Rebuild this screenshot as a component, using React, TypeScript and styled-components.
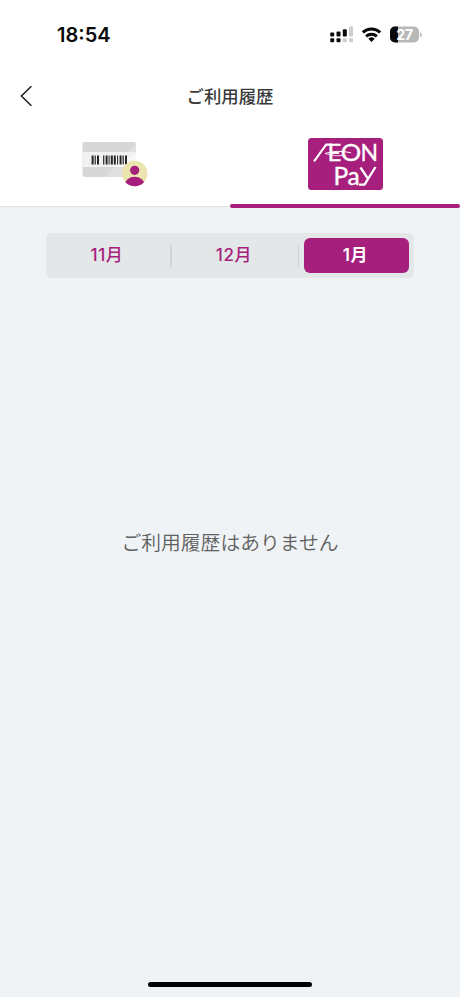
import React from 'react';
import styled, { createGlobalStyle } from 'styled-components';

const brand = '#a61f7d';

const GlobalStyle = createGlobalStyle`
  * { box-sizing: border-box; }
  html, body { margin: 0; padding: 0; }
  body { font-family: Inter, "Noto Sans CJK JP", sans-serif; background: #eff3f5; }
`;

const Screen = styled.div`
  width: 460px;
  height: 997px;
  display: flex;
  flex-direction: column;
  background: #eff3f5;
  overflow: hidden;
`;

const StatusBar = styled.div`
  height: 69px;
  flex: none;
  display: flex;
  align-items: center;
  justify-content: space-between;
  padding: 0 38px 0 57px;
  background: #fff;
`;

const Clock = styled.time`
  font: 600 20px/24px Inter, sans-serif;
  color: #0a0a0a;
`;

const StatusIcons = styled.svg`
  display: block;
  width: 92px;
  height: 20px;
  margin-bottom: 2px;
`;

const Header = styled.header`
  height: 54px;
  flex: none;
  display: grid;
  grid-template-columns: 52px 1fr 52px;
  align-items: center;
  background: #fff;
`;

const BackButton = styled.button`
  border: 0;
  padding: 0 0 0 19px;
  background: none;
  height: 24px;
  svg { display: block; }
`;

const Title = styled.h1`
  margin: 0;
  padding-bottom: 1px;
  text-align: center;
  font: 500 17.4px/24px "Noto Sans CJK JP", sans-serif;
  color: #3a3a3a;
`;

const Tabs = styled.nav`
  height: 84px;
  flex: none;
  display: flex;
  background: #fff;
  border-bottom: 1px solid #dfe2e4;
`;

const Tab = styled.button<{ $active?: boolean }>`
  flex: 1;
  height: 85px;
  border: 0;
  padding: 15px 0 0;
  display: flex;
  flex-direction: column;
  align-items: center;
  justify-content: space-between;
  background: none;
  &::after {
    content: '';
    width: 100%;
    height: 4px;
    border-radius: 2px;
    background: ${p => (p.$active ? brand : 'transparent')};
  }
  svg { display: block; }
`;

const MonthSwitch = styled.div`
  flex: none;
  width: 368px;
  height: 45px;
  margin: 26px auto 0;
  display: grid;
  grid-template-columns: 124px 2px 126px 1px 5px 105px;
  align-items: center;
  border-radius: 6px;
  background: #e3e7e8;
`;

const Month = styled.button<{ $selected?: boolean }>`
  height: 35px;
  border: 0;
  padding: 0 2px 2px 0;
  border-radius: 6px;
  font: ${p => (p.$selected ? 600 : 500)} 17px/24px Inter, "Noto Sans CJK JP", sans-serif;
  letter-spacing: 0.6px;
  color: ${p => (p.$selected ? '#fff' : brand)};
  background: ${p => (p.$selected ? brand : 'transparent')};
  &:last-child { grid-column: 6; }
`;

const Divider = styled.span`
  height: 22px;
  background: #d0d4d6;
`;

const Empty = styled.p`
  flex: 1;
  margin: 0;
  padding-top: 249px;
  text-align: center;
  font: 350 19.8px/30px "Noto Sans CJK JP", sans-serif;
  color: #606060;
`;

const HomeIndicator = styled.div`
  flex: none;
  width: 164px;
  height: 5px;
  margin: 0 auto 10px;
  border-radius: 3px;
  background: #000;
`;

function StatusGlyphs() {
  return (
    <StatusIcons viewBox="0 0 92 20">
      <g fill="#0a0a0a">
        <rect x="0.2" y="8.6" width="4" height="4" rx="1" />
        <rect x="6.5" y="7.4" width="4" height="5.2" rx="1" />
        <rect x="12.8" y="5.2" width="4" height="7.4" rx="1" />
        <rect x="0.2" y="14.3" width="4" height="4" rx="1" />
        <rect x="6.5" y="14.3" width="4" height="4" rx="1" />
      </g>
      <g fill="#cdcdcd">
        <rect x="19" y="2.5" width="4" height="10.1" rx="1" />
        <rect x="12.8" y="14.3" width="4" height="4" rx="1" />
        <rect x="19" y="14.3" width="4" height="4" rx="1" />
      </g>
      <g fill="none" stroke="#0a0a0a" strokeWidth="3">
        <path d="M32.8 8.4a12.7 12.7 0 0 1 17.4 0" />
        <path d="M36.1 12.3a8 8 0 0 1 10.8 0" />
      </g>
      <path d="M38.3 14.7a4.7 4.7 0 0 1 6.4 0L41.5 17.9z" fill="#0a0a0a" />
      <rect x="60" y="2.6" width="29" height="15.8" rx="5" fill="#b8b8b8" />
      <path d="M68 2.6h-3a5 5 0 0 0-5 5v5.8a5 5 0 0 0 5 5h3z" fill="#0a0a0a" />
      <path d="M90 8.2q1.8.5 1.8 2.5T90 13.2z" fill="#b8b8b8" />
      <text x="74.3" y="15.7" textAnchor="middle" fontFamily="Inter" fontSize="14.3" fontWeight="700" letterSpacing="-0.5" fill="#fff">27</text>
    </StatusIcons>
  );
}

const bars = [[0, 2], [3, 1.2], [5.4, 2], [11.5, 1.2], [14, 2], [17, 1], [19.2, 2], [22.2, 2], [25.5, 1], [28, 2], [31, 1.2], [33.4, 2]];

function MemberCardIcon() {
  return (
    <svg width="66" height="52" viewBox="0 0 66 52">
      <defs>
        <clipPath id="card"><rect x="0.5" y="4" width="53.5" height="35" rx="2" /></clipPath>
        <clipPath id="avatar"><circle cx="52.7" cy="35.5" r="12.7" /></clipPath>
      </defs>
      <g clipPath="url(#card)">
        <rect x="0" y="4" width="55" height="35" fill="#d7d7d7" />
        <path d="M55 4v35H23z" fill="#dfdfdf" />
        <rect x="0" y="14" width="55" height="15" fill="#f1f1f1" />
        <path d="M55 14v15H32z" fill="#f7f7f7" />
      </g>
      {bars.map(([x, w]) => <rect key={x} x={9.6 + x} y="17.5" width={w} height="9" fill="#292526" />)}
      <circle cx="52.7" cy="35.5" r="12.7" fill="#ebe4ae" />
      <g clipPath="url(#avatar)" fill={brand}>
        <circle cx="52.7" cy="32.3" r="4.6" />
        <ellipse cx="52.7" cy="47" rx="10" ry="8.2" />
      </g>
    </svg>
  );
}

function AeonPayLogo() {
  return (
    <svg width="75" height="52" viewBox="0 0 75 52">
      <rect width="75" height="52" rx="3.5" fill={brand} />
      <g fill="#fff" stroke="#fff" strokeWidth="0.35" fontFamily="Lato, sans-serif" fontWeight="400">
        <text x="19.5" y="23" fontSize="24">E</text>
        <text x="32.8" y="23" fontSize="24" textLength="20.5" lengthAdjust="spacingAndGlyphs">O</text>
        <text x="52.4" y="23" fontSize="24" textLength="17.5" lengthAdjust="spacingAndGlyphs">N</text>
        <text x="25.4" y="46.5" fontSize="24.5">P</text>
        <text x="39.5" y="46.5" fontSize="24.5">a</text>
      </g>
      <g fill="none" stroke="#fff" strokeWidth="2.1">
        <path d="M6 23.3 18.2 6.6H24" />
        <path d="M17 15.5Q29 11.5 43 14.8" strokeWidth="1" />
        <path d="M17 15.5Q27 19 38 17.5" strokeWidth="0.8" />
        <path d="M52.5 29.5 59.5 40M67.5 29 56.5 46.7H51" strokeWidth="2.3" />
      </g>
    </svg>
  );
}

export default function App() {
  return (
    <>
      <GlobalStyle />
      <Screen>
        <StatusBar>
          <Clock>18:54</Clock>
          <StatusGlyphs />
        </StatusBar>
        <Header>
          <BackButton aria-label="戻る">
            <svg width="14" height="24" viewBox="0 0 14 24" fill="none" stroke="#222" strokeWidth="1.6">
              <path d="M12.4 2.3 2.4 12l10 9.7" />
            </svg>
          </BackButton>
          <Title>ご利用履歴</Title>
        </Header>
        <Tabs>
          <Tab aria-label="会員カード"><MemberCardIcon /></Tab>
          <Tab $active aria-label="AEON Pay"><AeonPayLogo /></Tab>
        </Tabs>
        <MonthSwitch>
          <Month>11月</Month>
          <Divider />
          <Month>12月</Month>
          <Divider />
          <Month $selected>1月</Month>
        </MonthSwitch>
        <Empty>ご利用履歴はありません</Empty>
        <HomeIndicator />
      </Screen>
    </>
  );
}
